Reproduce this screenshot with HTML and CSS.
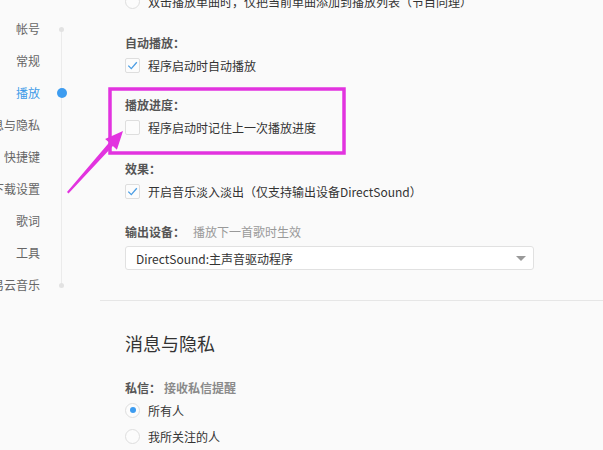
FILE: index.html
```html
<!DOCTYPE html>
<html lang="zh-CN">
<head>
<meta charset="utf-8">
<title>设置 - 播放</title>
<link rel="stylesheet" href="styles.css">
</head>
<body>
<div class="page">
  <nav class="nav">
    <div class="nav-item is-first"><span class="nav-label">帐号</span><span class="track"><i class="end-dot"></i></span></div>
    <div class="nav-item"><span class="nav-label">常规</span><span class="track"></span></div>
    <div class="nav-item is-active"><span class="nav-label">播放</span><span class="track"><i class="active-dot"></i></span></div>
    <div class="nav-item"><span class="nav-label">消息与隐私</span><span class="track"></span></div>
    <div class="nav-item"><span class="nav-label">快捷键</span><span class="track"></span></div>
    <div class="nav-item"><span class="nav-label">下载设置</span><span class="track"></span></div>
    <div class="nav-item"><span class="nav-label">歌词</span><span class="track"></span></div>
    <div class="nav-item"><span class="nav-label">工具</span><span class="track"></span></div>
    <div class="nav-item is-last"><span class="nav-label">网易云音乐</span><span class="track"><i class="end-dot"></i></span></div>
  </nav>

  <main class="content">
    <section class="group group-play">
      <div class="row row-top">
        <span class="radio"></span>
        <span class="label">双击播放单曲时，仅把当前单曲添加到播放列表（节目同理）</span>
      </div>

      <div class="block block-auto">
        <div class="block-title">自动播放：</div>
        <div class="row">
          <span class="checkbox"><svg viewBox="0 0 15 15" width="15" height="15"><polyline points="3.3,7.6 6.3,10.6 11.8,4.3" fill="none" stroke="#4a9de4" stroke-width="1.3"/></svg></span>
          <span class="label">程序启动时自动播放</span>
        </div>
      </div>

      <div class="block block-progress">
        <div class="block-title">播放进度：</div>
        <div class="row">
          <span class="checkbox"></span>
          <span class="label">程序启动时记住上一次播放进度</span>
        </div>
      </div>

      <div class="block block-effect">
        <div class="block-title">效果：</div>
        <div class="row">
          <span class="checkbox"><svg viewBox="0 0 15 15" width="15" height="15"><polyline points="3.3,7.6 6.3,10.6 11.8,4.3" fill="none" stroke="#4a9de4" stroke-width="1.3"/></svg></span>
          <span class="label">开启音乐淡入淡出（仅支持输出设备DirectSound）</span>
        </div>
      </div>

      <div class="block block-output">
        <div class="block-title">输出设备：<span class="hint">播放下一首歌时生效</span></div>
        <div class="select">
          <span class="select-text">DirectSound:主声音驱动程序</span>
          <span class="caret"></span>
        </div>
      </div>
    </section>

    <section class="group group-privacy">
      <h2 class="group-heading">消息与隐私</h2>
      <div class="block block-msg">
        <div class="block-title">私信：<span class="sub">接收私信提醒</span></div>
        <div class="row row-radio">
          <span class="radio is-checked"><i></i></span>
          <span class="label">所有人</span>
        </div>
        <div class="row row-radio row-radio-2">
          <span class="radio"></span>
          <span class="label">我所关注的人</span>
        </div>
      </div>
    </section>
  </main>

  <svg class="annotation" width="603" height="450" viewBox="0 0 603 450">
    <rect x="110" y="89" width="234" height="64" fill="none" stroke="#e233df" stroke-width="3.5"/>
    <polygon points="67,192 109.2,142.6 105.1,138.9 123,131 116.9,149.7 112.9,146 68.5,193.4" fill="#e233df"/>
  </svg>
</div>
</body>
</html>
```

FILE: styles.css
```css
* { box-sizing: border-box; }

html, body {
  margin: 0;
  padding: 0;
  background: #fafafa;
}

body {
  width: 603px;
  height: 450px;
  overflow: hidden;
  font-family: "Noto Sans CJK SC", "Noto Sans", sans-serif;
  font-size: 12px;
  color: #333;
}

.page {
  position: relative;
  display: flex;
  width: 603px;
  height: 450px;
}

/* ---------- left navigation ---------- */
.nav {
  width: 100px;
  flex: none;
  padding-top: 13px;
  display: flex;
  flex-direction: column;
}

.nav-item {
  display: flex;
  align-items: center;
  height: 32px;
}

.nav-label {
  width: 40px;
  flex: none;
  display: flex;
  justify-content: flex-end;
  white-space: nowrap;
  color: #666;
  font-size: 12px;
  line-height: 32px;
}

.is-active .nav-label { color: #3d9ae8; }

.track {
  width: 21px;
  height: 32px;
  margin-left: 11px;
  display: flex;
  align-items: center;
  justify-content: center;
  background: linear-gradient(#ebebeb, #ebebeb) center / 1px 100% no-repeat;
}

.is-first .track { background-position: center bottom; background-size: 1px 50%; }
.is-last .track { background-position: center top; background-size: 1px 50%; }

.end-dot {
  width: 5px;
  height: 5px;
  border-radius: 50%;
  background: #e2e2e2;
}

.active-dot {
  width: 10px;
  height: 10px;
  border-radius: 50%;
  background: #3d9cf0;
}

/* ---------- content ---------- */
.content {
  flex: 1;
  min-width: 0;
}

.group { padding-left: 25px; }

.group-play {
  padding-bottom: 30px;
  border-bottom: 1px solid #e6e6e6;
}

.row {
  display: flex;
  align-items: center;
  gap: 8px;
  height: 24px;
  white-space: nowrap;
}

.row-top { margin-top: -11px; }

.label { color: #333; }

.block-title {
  height: 20px;
  line-height: 20px;
  font-weight: bold;
  color: #555;
  white-space: nowrap;
}

.block-auto { margin-top: 20px; }
.block-progress { margin-top: 18px; }
.block-effect { margin-top: 20px; }
.block-output { margin-top: 19px; }

.hint {
  font-weight: normal;
  color: #999;
  margin-left: 8px;
}

.sub {
  color: #8a8a8a;
  margin-left: 3px;
}

.checkbox {
  width: 15px;
  height: 15px;
  flex: none;
  border: 1px solid #dedede;
  border-radius: 2px;
  background: #fcfcfc;
  display: flex;
  align-items: center;
  justify-content: center;
  overflow: hidden;
}

.checkbox svg { flex: none; }

.radio {
  width: 15px;
  height: 15px;
  flex: none;
  border: 1px solid #dedede;
  border-radius: 50%;
  background: #fcfcfc;
  display: flex;
  align-items: center;
  justify-content: center;
}

.radio.is-checked i {
  width: 6px;
  height: 6px;
  border-radius: 50%;
  background: #3d9cf0;
}

.select {
  margin-top: 4px;
  width: 409px;
  height: 24px;
  border: 1px solid #e1e1e1;
  border-radius: 3px;
  background: #fff;
  display: flex;
  align-items: center;
  justify-content: space-between;
  padding: 0 7px 0 10px;
}

.select-text { color: #333; white-space: nowrap; }

.caret {
  width: 0;
  height: 0;
  border-left: 5px solid transparent;
  border-right: 5px solid transparent;
  border-top: 5px solid #999;
}

.group-privacy { padding-top: 30px; }

.group-heading {
  margin: 0;
  height: 24px;
  line-height: 24px;
  font-size: 18px;
  font-weight: normal;
  color: #333;
}

.block-msg { margin-top: 23px; }

.row-radio-2 { margin-top: 2px; }

/* ---------- annotation overlay ---------- */
.annotation {
  position: absolute;
  left: 0;
  top: 0;
  pointer-events: none;
}
```
